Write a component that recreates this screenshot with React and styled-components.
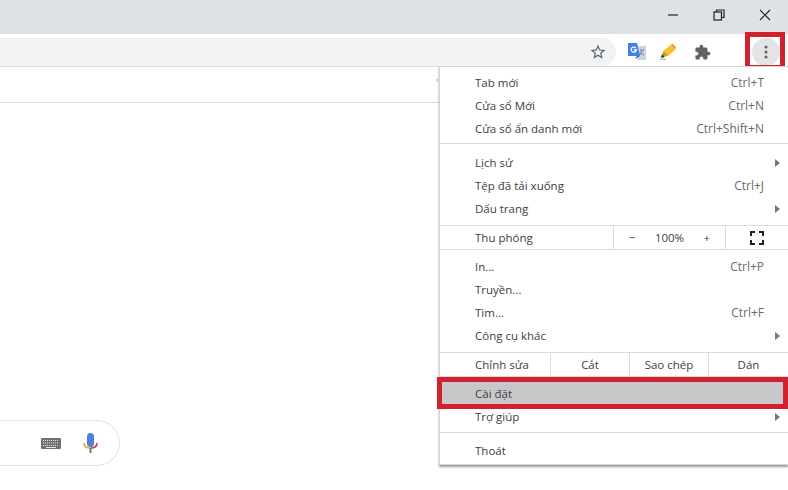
import React from "react";
import styled, { createGlobalStyle } from "styled-components";

const GlobalStyle = createGlobalStyle`
  html, body {
    margin: 0;
    padding: 0;
    background: #fff;
  }
  body {
    font-family: "Open Sans", "Noto Sans", "Liberation Sans", sans-serif;
    font-size: 11.5px;
    color: #3c4043;
  }
`;

const Page = styled.div`
  position: relative;
  width: 788px;
  height: 490px;
  overflow: hidden;
  display: flex;
  flex-direction: column;
`;

const TitleBar = styled.div`
  height: 34px;
  background: #dee1e6;
  display: flex;
  justify-content: flex-end;
`;

const WinButton = styled.div`
  width: 46px;
  height: 29px;
  display: flex;
  align-items: center;
  justify-content: center;
`;

const Toolbar = styled.div`
  height: 32px;
  background: #fff;
  border-bottom: 1px solid #dadce0;
  display: flex;
  align-items: flex-end;
`;

const Omnibox = styled.div`
  width: 616px;
  height: 28px;
  background: #f1f3f4;
  border-radius: 0 14px 14px 0;
  display: flex;
  align-items: center;
  justify-content: flex-end;
  padding-right: 9px;
  box-sizing: border-box;
`;

const ToolIcons = styled.div`
  flex: 1;
  height: 32px;
  box-sizing: border-box;
  padding-top: 4px;
  display: flex;
  align-items: center;
`;

const ToolIcon = styled.div`
  width: 20px;
  height: 20px;
  display: flex;
  align-items: center;
  justify-content: center;
  margin-left: ${(p) => p.$gap}px;
`;

const DotsButton = styled.div`
  position: relative;
  width: 28px;
  height: 28px;
  margin-left: 40px;
  border-radius: 50%;
  background: #e3e4e5;
  display: flex;
  align-items: center;
  justify-content: center;
`;

const DotsFrame = styled.div`
  position: absolute;
  left: -7px;
  top: -6px;
  width: 30px;
  height: 28px;
  border: 5px solid #d2202e;
`;

const BookmarkBar = styled.div`
  height: 35px;
  border-bottom: 1px solid #dadce0;
  background: #fff;
  padding-left: 436px;
  line-height: 32px;
  font-size: 10px;
  color: #9a9a9a;
`;

const Content = styled.div`
  flex: 1;
  display: flex;
  align-items: flex-end;
  padding-bottom: 24px;
`;

const SearchBox = styled.div`
  width: 120px;
  height: 46px;
  box-sizing: border-box;
  border: 1px solid #e2e3e4;
  border-left: 0;
  border-radius: 0 23px 23px 0;
  display: flex;
  align-items: center;
  justify-content: flex-end;
  gap: 22px;
  padding-right: 21px;
`;

const Menu = styled.div`
  position: absolute;
  left: 439px;
  top: 66px;
  width: 349px;
  height: 399px;
  box-sizing: border-box;
  padding-top: 4px;
  background: #fff;
  border: 1px solid #d5d6d8;
  border-right: 0;
  box-shadow: 0 2px 2px rgba(0, 0, 0, 0.4);
`;

const Row = styled.div`
  position: relative;
  height: 23px;
  display: grid;
  grid-template-columns: 1fr auto 24px;
  align-items: center;
  padding-left: 35px;
  background: ${(p) => (p.$active ? "#c8c8ca" : "transparent")};
`;

const Shortcut = styled.span`
  font-size: 12px;
  color: #6a6a6a;
`;

const Arrow = styled.span`
  width: 0;
  height: 0;
  justify-self: end;
  margin-right: 8px;
  border-left: 5px solid #777;
  border-top: 4px solid transparent;
  border-bottom: 4px solid transparent;
`;

const Separator = styled.div`
  height: 1px;
  background: #dcdcdc;
  margin: ${(p) => p.$top}px 0 ${(p) => p.$bottom}px;
`;

const SplitRow = styled.div`
  height: 23px;
  display: grid;
  grid-template-columns: ${(p) => p.$columns};
  align-items: stretch;
`;

const SplitLabel = styled.div`
  padding-left: 35px;
  display: flex;
  align-items: center;
`;

const SplitCell = styled.div`
  border-left: 1px solid #dcdcdc;
  display: flex;
  align-items: center;
  justify-content: ${(p) => p.$justify || "center"};
  padding: 0 ${(p) => p.$pad || 0}px;
`;

const HighlightFrame = styled.div`
  position: absolute;
  left: -3px;
  right: 0;
  top: -5px;
  bottom: -4px;
  border: 5px solid #d2202e;
  pointer-events: none;
`;

const FullscreenIcon = () => (
  <svg width="14" height="14" viewBox="0 0 14 14" fill="none" stroke="#222" strokeWidth="2">
    <path d="M1 5V1h4M9 1h4v4M13 9v4H9M5 13H1V9" />
  </svg>
);

const MinimizeIcon = () => (
  <svg width="12" height="12" viewBox="0 0 12 12" stroke="#222" strokeWidth="1.2">
    <path d="M1 6h10" />
  </svg>
);

const RestoreIcon = () => (
  <svg width="12" height="12" viewBox="0 0 12 12" fill="none" stroke="#222" strokeWidth="1.2">
    <rect x="1" y="3" width="7.5" height="8" />
    <path d="M3.5 3V1H11v7.5H8.5" />
  </svg>
);

const CloseIcon = () => (
  <svg width="12" height="12" viewBox="0 0 12 12" stroke="#222" strokeWidth="1.1">
    <path d="M1 1l10 10M11 1L1 11" />
  </svg>
);

const StarIcon = () => (
  <svg width="18" height="18" viewBox="0 0 24 24" fill="#5f6368">
    <path d="M22 9.24l-7.19-.62L12 2 9.19 8.63 2 9.24l5.46 4.73L5.82 21 12 17.27 18.18 21l-1.63-7.03L22 9.24zM12 15.4l-3.76 2.27 1-4.28-3.32-2.88 4.38-.38L12 6.1l1.71 4.04 4.38.38-3.32 2.88 1 4.28L12 15.4z" />
  </svg>
);

const TranslateIcon = () => (
  <svg width="18" height="20" viewBox="0 0 18 20">
    <path d="M7 4h11v14H9z" fill="#c9d3e6" />
    <path d="M12 8h4M14 8v1c0 2-1.500 3.500-3 4M12 10c.8 1.500 2 2.500 4 3" stroke="#6b7a94" strokeWidth="1" fill="none" />
    <path d="M0 1h9l3 13H0z" fill="#3f7fe8" />
    <path d="M7 17l2-3h3z" fill="#2a5fc0" />
    <path d="M8 6.200A2.600 2.600 0 1 0 8.400 8H6" fill="none" stroke="#fff" strokeWidth="1.300" />
  </svg>
);

const PencilIcon = () => (
  <svg width="18" height="18" viewBox="0 0 20 20">
    <path d="M5 9l8-7 5 5.500-8 7z" fill="#f6c02c" />
    <path d="M13 2l2-1.200 3.800 3.700-.8 3z" fill="#e8a020" />
    <path d="M5 9l-1.500 3.500 3 2.500 3.500-1z" fill="#cf9a20" />
    <path d="M2 16l1.500-3.500 3 2.500-2 1.500z" fill="#333" />
    <path d="M1 18h7" stroke="#999" strokeWidth="1" />
  </svg>
);

const PuzzleIcon = () => (
  <svg width="17" height="17" viewBox="0 0 24 24" fill="#5f6368">
    <path d="M20.5 11H19V7c0-1.100-.9-2-2-2h-4V3.500C13 2.120 11.880 1 10.500 1S8 2.120 8 3.500V5H4c-1.100 0-1.990.9-1.990 2v3.800H3.500c1.490 0 2.700 1.210 2.700 2.700s-1.210 2.700-2.700 2.700H2V20c0 1.100.9 2 2 2h3.800v-1.500c0-1.490 1.210-2.700 2.700-2.700 1.490 0 2.700 1.210 2.700 2.700V22H17c1.100 0 2-.9 2-2v-4h1.500c1.380 0 2.500-1.120 2.500-2.500S21.880 11 20.500 11z" />
  </svg>
);

const DotsIcon = () => (
  <svg width="4" height="14" viewBox="0 0 4 14" fill="#5f6368">
    <circle cx="2" cy="2" r="1.500" />
    <circle cx="2" cy="7" r="1.500" />
    <circle cx="2" cy="12" r="1.500" />
  </svg>
);

const KeyboardIcon = () => (
  <svg width="20" height="11" viewBox="0 0 20 11">
    <rect width="20" height="11" rx="1" fill="#707070" />
    <path d="M2 2.500h16M2 5h16M2 7.500h16" stroke="#e6e6e6" strokeWidth="1" strokeDasharray="1 1" />
    <path d="M5 9.500h10" stroke="#e6e6e6" strokeWidth="1" />
  </svg>
);

const MicIcon = () => (
  <svg width="15" height="20" viewBox="0 0 15 20" fill="none">
    <rect x="4" y="0" width="7" height="14" rx="3.500" fill="#4a7fe0" />
    <path d="M1 10c0 3 2.500 5 6.500 5" stroke="#e8b23a" strokeWidth="1.700" />
    <path d="M14 10c0 3-2.500 5-6.500 5" stroke="#b8503a" strokeWidth="1.700" />
    <path d="M7.500 15v5" stroke="#4d8a62" strokeWidth="2" />
  </svg>
);

const MenuRow = ({ label, shortcut, arrow, active, children }) => (
  <Row $active={active}>
    <span>{label}</span>
    <Shortcut>{shortcut}</Shortcut>
    {arrow ? <Arrow /> : <span />}
    {children}
  </Row>
);

const App = () => (
  <Page>
    <GlobalStyle />
    <TitleBar>
      <WinButton><MinimizeIcon /></WinButton>
      <WinButton><RestoreIcon /></WinButton>
      <WinButton><CloseIcon /></WinButton>
    </TitleBar>
    <Toolbar>
      <Omnibox><StarIcon /></Omnibox>
      <ToolIcons>
        <ToolIcon $gap={11}><TranslateIcon /></ToolIcon>
        <ToolIcon $gap={11}><PencilIcon /></ToolIcon>
        <ToolIcon $gap={14}><PuzzleIcon /></ToolIcon>
        <DotsButton>
          <DotsIcon />
          <DotsFrame />
        </DotsButton>
      </ToolIcons>
    </Toolbar>
    <BookmarkBar>'</BookmarkBar>
    <Content>
      <SearchBox>
        <KeyboardIcon />
        <MicIcon />
      </SearchBox>
    </Content>
    <Menu>
      <MenuRow label="Tab mới" shortcut="Ctrl+T" />
      <MenuRow label="Cửa sổ Mới" shortcut="Ctrl+N" />
      <MenuRow label="Cửa sổ ẩn danh mới" shortcut="Ctrl+Shift+N" />
      <Separator $top={3} $bottom={7} />
      <MenuRow label="Lịch sử" arrow />
      <MenuRow label="Tệp đã tải xuống" shortcut="Ctrl+J" />
      <MenuRow label="Dấu trang" arrow />
      <Separator $top={5} $bottom={0} />
      <SplitRow $columns="173px 112px 1fr">
        <SplitLabel>Thu phóng</SplitLabel>
        <SplitCell $justify="space-between" $pad={15}>
          <span>−</span>
          <span>100%</span>
          <span>+</span>
        </SplitCell>
        <SplitCell><FullscreenIcon /></SplitCell>
      </SplitRow>
      <Separator $top={0} $bottom={5} />
      <MenuRow label="In..." shortcut="Ctrl+P" />
      <MenuRow label="Truyền..." />
      <MenuRow label="Tìm..." shortcut="Ctrl+F" />
      <MenuRow label="Công cụ khác" arrow />
      <Separator $top={5} $bottom={0} />
      <SplitRow $columns="110px 79px 79px 1fr">
        <SplitLabel>Chỉnh sửa</SplitLabel>
        <SplitCell>Cắt</SplitCell>
        <SplitCell>Sao chép</SplitCell>
        <SplitCell>Dán</SplitCell>
      </SplitRow>
      <Separator $top={0} $bottom={5} />
      <MenuRow label="Cài đặt" active>
        <HighlightFrame />
      </MenuRow>
      <MenuRow label="Trợ giúp" arrow />
      <Separator $top={4} $bottom={6} />
      <MenuRow label="Thoát" />
    </Menu>
  </Page>
);

export default App;
